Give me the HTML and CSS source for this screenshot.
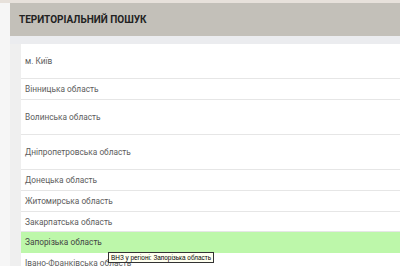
FILE: index.html
```html
<!DOCTYPE html>
<html lang="uk">
<head>
    <meta charset="UTF-8">
    <title>Територіальний пошук</title>
    <link rel="stylesheet" href="styles.css">
</head>
<body>
    <div class="panel">
        <div class="panel-title">ТЕРИТОРІАЛЬНИЙ ПОШУК</div>
        <div class="panel-body">
            <ul class="regions">
                <li class="tall">м. Київ</li>
                <li>Вінницька область</li>
                <li class="tall">Волинська область</li>
                <li class="tall">Дніпропетровська область</li>
                <li>Донецька область</li>
                <li>Житомирська область</li>
                <li class="short">Закарпатська область</li>
                <li class="active">Запорізька область
                    <span class="tip">ВНЗ у регіоні: Запорізька область</span>
                </li>
                <li>Івано-Франківська область</li>
            </ul>
        </div>
    </div>
</body>
</html>
```

FILE: styles.css
```css
body {
    margin: 0;
    background: #f6f6f6;
    border-top: 3px solid #e7e1db;
    font-family: Roboto, "Liberation Sans", Arial, sans-serif;
    overflow: hidden;
}
.panel {
    margin-left: 10px;
}
.panel-title {
    background: #c3c0b9;
    height: 33px;
    line-height: 33px;
    padding-left: 9px;
    font-size: 10px;
    font-weight: bold;
    color: #222;
}
.panel-body {
    background: #efefef;
    border-top: 8px solid #ebecef;
    padding-left: 11px;
}
.regions {
    list-style: none;
    margin: 0;
    padding: 0;
    background: #fff;
}
.regions li {
    position: relative;
    height: 20px;
    line-height: 21px;
    padding-left: 4px;
    font-size: 8.3px;
    color: #5c5c5c;
    border-bottom: 1px solid #e6e6e6;
}
.regions li.tall {
    height: 34px;
    line-height: 35px;
}
.regions li.short {
    height: 19px;
}
.regions li.active {
    background: #bdf7aa;
    color: #444;
    border-bottom-color: #bdf7aa;
}
.tip {
    position: absolute;
    left: 87px;
    top: 20px;
    z-index: 2;
    background: #fffff0;
    border: 1px solid #333;
    padding: 0 2px;
    font-family: "Liberation Sans", Arial, sans-serif;
    font-size: 6.4px;
    line-height: 9px;
    color: #000;
    white-space: nowrap;
}
```
